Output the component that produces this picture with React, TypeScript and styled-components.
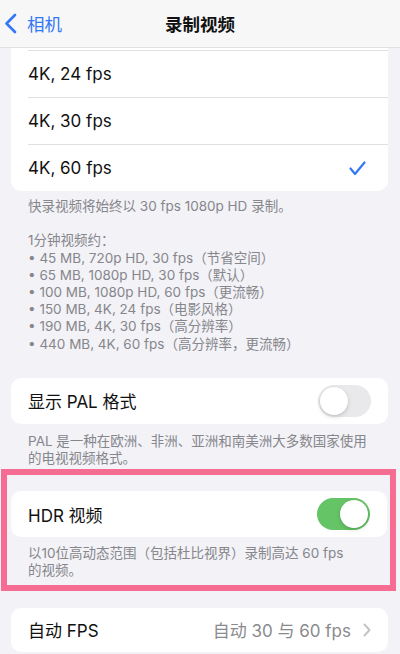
import React from 'react';
import styled, { createGlobalStyle } from 'styled-components';

const GlobalStyle = createGlobalStyle`
  html, body {
    margin: 0;
    padding: 0;
    background: #f2f2f7;
  }
  body {
    font-family: Inter, "Noto Sans CJK SC", sans-serif;
    -webkit-font-smoothing: antialiased;
  }
`;

const Screen = styled.div`
  width: 400px;
  height: 654px;
  overflow: hidden;
  background: #f2f2f7;
`;

const NavBar = styled.div`
  height: 47px;
  background: #f7f7f7;
  border-bottom: 1px solid #e2e2e6;
  display: flex;
  align-items: center;
  justify-content: center;
  position: relative;
`;

const BackButton = styled.div`
  position: absolute;
  left: 4px;
  top: 0;
  bottom: 0;
  display: flex;
  align-items: center;
  gap: 10px;
  color: #3478f6;
  font-size: 17.5px;
`;

const Title = styled.div`
  font-size: 17.5px;
  font-weight: 600;
  color: #111;
`;

const Card = styled.div<{ $flatTop?: boolean }>`
  margin: 0 12px 0 11px;
  background: #fff;
  border-radius: ${(p) => (p.$flatTop ? '0 0 10px 10px' : '10px')};
  padding-top: ${(p) => (p.$flatTop ? '2px' : '0')};
  overflow: hidden;
`;

const Row = styled.div<{ $separator?: boolean; $height?: number }>`
  height: ${(p) => p.$height ?? 46}px;
  margin-left: 17px;
  padding-right: 17px;
  display: flex;
  align-items: center;
  justify-content: space-between;
  border-top: ${(p) => (p.$separator ? '1px solid #e0e0e4' : 'none')};
  font-size: 17px;
  color: #111;
`;

const Footer = styled.div<{ $top?: number; $bottom?: number; $left?: number; $right?: number }>`
  padding: ${(p) => p.$top ?? 8}px ${(p) => p.$right ?? 28}px
    ${(p) => p.$bottom ?? 0}px ${(p) => p.$left ?? 28}px;
  font-size: 13.5px;
  line-height: 17.2px;
  color: #86868b;
`;

const Gap = styled.div<{ $h: number }>`
  height: ${(p) => p.$h}px;
`;

const Highlight = styled.div`
  margin: 0 4px 0 1px;
  border: 6px solid #f56d93;
  padding: 16px 3px 5px 4px;
`;

const HighlightCard = styled(Card)`
  margin: 0;
`;

const Toggle = styled.div<{ $on?: boolean }>`
  width: 53px;
  height: 32px;
  border-radius: 16px;
  background: ${(p) => (p.$on ? '#65c466' : '#e9e9eb')};
  position: relative;
  flex-shrink: 0;
`;

const Knob = styled.div<{ $on?: boolean }>`
  position: absolute;
  top: 2px;
  left: ${(p) => (p.$on ? '23px' : '2px')};
  width: 28px;
  height: 28px;
  border-radius: 50%;
  background: #fff;
  box-shadow: 0 2px 4px rgba(0, 0, 0, 0.15), 0 0 0 0.5px rgba(0, 0, 0, 0.06);
`;

const Detail = styled.div`
  display: flex;
  align-items: center;
  gap: 12px;
  color: #8a8a8e;
`;

const Switch = ({ on }: { on?: boolean }) => (
  <Toggle $on={on}>
    <Knob $on={on} />
  </Toggle>
);

const Check = () => (
  <svg width="17" height="15" viewBox="0 0 17 15" style={{ marginRight: 5 }}>
    <path
      d="M1.5 7.5 L6 13 L15.5 1.5"
      fill="none"
      stroke="#3478f6"
      strokeWidth="2.2"
      strokeLinecap="round"
      strokeLinejoin="round"
    />
  </svg>
);

const BackChevron = () => (
  <svg width="13" height="21" viewBox="0 0 13 21">
    <path
      d="M11 2 L2.5 10.5 L11 19"
      fill="none"
      stroke="#3478f6"
      strokeWidth="2.7"
      strokeLinecap="round"
      strokeLinejoin="round"
    />
  </svg>
);

const RightChevron = () => (
  <svg width="8" height="14" viewBox="0 0 8 14">
    <path
      d="M1.5 1.5 L6.5 7 L1.5 12.5"
      fill="none"
      stroke="#c4c4c7"
      strokeWidth="2"
      strokeLinecap="round"
      strokeLinejoin="round"
    />
  </svg>
);

const formats = ['4K, 24 fps', '4K, 30 fps', '4K, 60 fps'];

const sizes = [
  '• 45 MB, 720p HD, 30 fps（节省空间）',
  '• 65 MB, 1080p HD, 30 fps（默认）',
  '• 100 MB, 1080p HD, 60 fps（更流畅）',
  '• 150 MB, 4K, 24 fps（电影风格）',
  '• 190 MB, 4K, 30 fps（高分辨率）',
  '• 440 MB, 4K, 60 fps（高分辨率，更流畅）',
];

export default function App() {
  return (
    <Screen>
      <GlobalStyle />
      <NavBar>
        <BackButton>
          <BackChevron />
          相机
        </BackButton>
        <Title>录制视频</Title>
      </NavBar>

      <Card $flatTop>
        {formats.map((f, i) => (
          <Row key={f} $separator>
            {f}
            {i === formats.length - 1 && <Check />}
          </Row>
        ))}
      </Card>
      <Footer $top={7}>
        快录视频将始终以 30 fps 1080p HD 录制。
        <br />
        <br />
        1分钟视频约：
        {sizes.map((s) => (
          <div key={s}>{s}</div>
        ))}
      </Footer>

      <Gap $h={25} />
      <Card>
        <Row>
          显示 PAL 格式
          <Switch />
        </Row>
      </Card>
      <Footer $top={9} $bottom={2}>
        PAL 是一种在欧洲、非洲、亚洲和南美洲大多数国家使用的电视视频格式。
      </Footer>

      <Highlight>
        <HighlightCard>
          <Row>
            HDR 视频
            <Switch on />
          </Row>
        </HighlightCard>
        <Footer $top={8} $left={17} $right={27}>
          以10位高动态范围（包括杜比视界）录制高达 60 fps 的视频。
        </Footer>
      </Highlight>

      <Gap $h={17} />
      <Card>
        <Row $height={44}>
          自动 FPS
          <Detail>
            自动 30 与 60 fps
            <RightChevron />
          </Detail>
        </Row>
      </Card>
    </Screen>
  );
}
